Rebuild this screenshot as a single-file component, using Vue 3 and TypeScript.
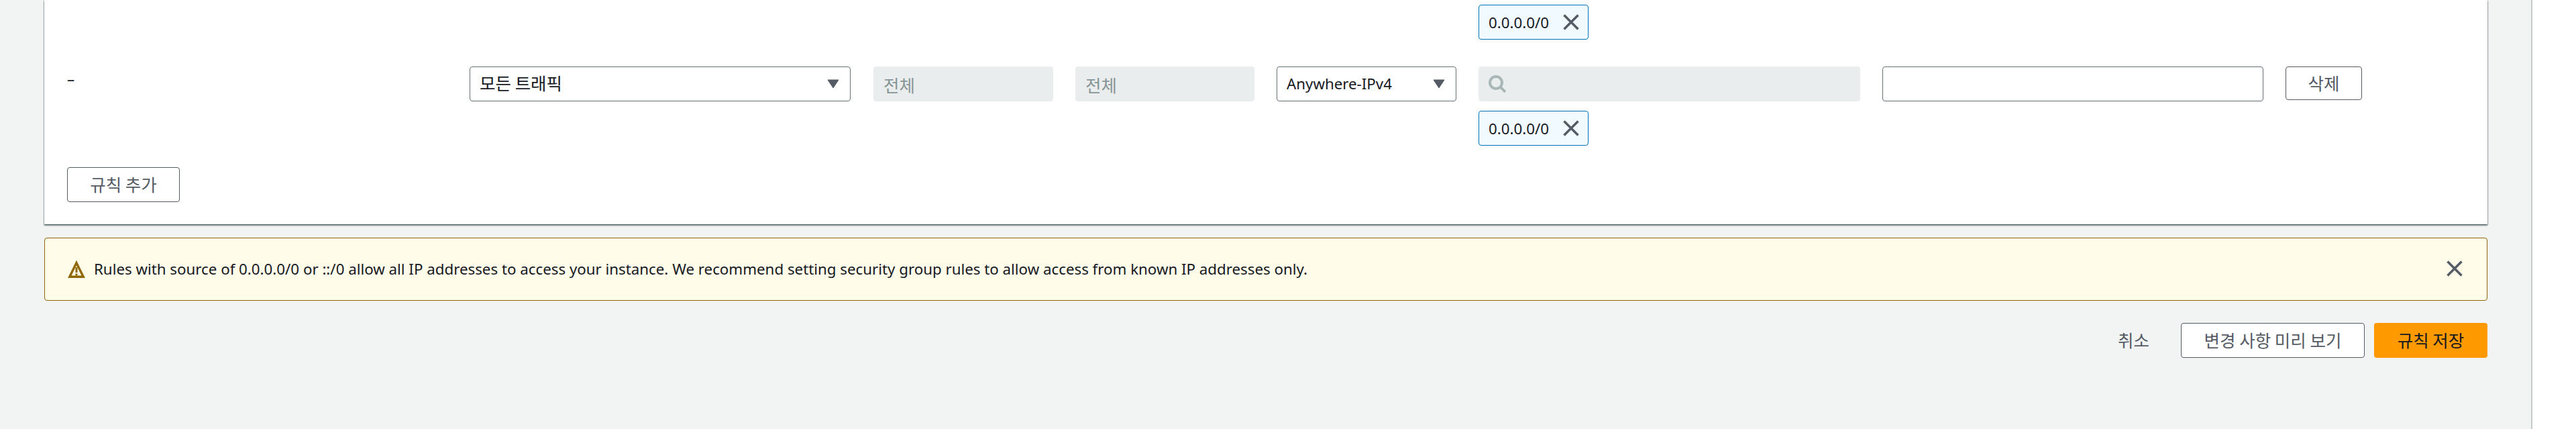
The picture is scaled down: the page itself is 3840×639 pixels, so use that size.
<template>
  <div class="page">
    <main class="content">
      <section class="card">
        <div class="rule-row">
          <div class="source-cell">
            <span class="tag">
              <span>0.0.0.0/0</span>
              <svg class="close" viewBox="0 0 16 16"><path d="M2 2l12 12M14 2L2 14" /></svg>
            </span>
          </div>
        </div>

        <div v-for="rule in rules" :key="rule.type" class="rule-row">
          <div class="rule-name">{{ rule.name }}</div>
          <div class="select wide">
            <span class="ko">{{ rule.type }}</span>
            <svg class="caret" viewBox="0 0 18 14"><path d="M1 1h16L9 13z" /></svg>
          </div>
          <div class="field disabled ko">{{ rule.protocol }}</div>
          <div class="field disabled ko">{{ rule.port }}</div>
          <div class="select">
            <span>{{ rule.sourceType }}</span>
            <svg class="caret" viewBox="0 0 18 14"><path d="M1 1h16L9 13z" /></svg>
          </div>
          <div class="source-cell">
            <div class="field disabled search">
              <svg class="search-icon" viewBox="0 0 26 26">
                <circle cx="11" cy="11" r="9" />
                <path d="M17 17l8 8" />
              </svg>
            </div>
            <span class="tag">
              <span>{{ rule.source }}</span>
              <svg class="close" viewBox="0 0 16 16"><path d="M2 2l12 12M14 2L2 14" /></svg>
            </span>
          </div>
          <div class="field desc"></div>
          <button class="btn delete ko" type="button">삭제</button>
        </div>

        <button class="btn add ko" type="button">규칙 추가</button>
      </section>

      <div class="alert">
        <svg class="warn" viewBox="0 0 26 26">
          <path class="warn-box" d="M13 3.5L2.8 24.2h20.4z" />
          <path class="warn-mark" d="M13 10v8M13 19.5v3" />
        </svg>
        <p class="alert-text">{{ warning }}</p>
        <svg class="close alert-close" viewBox="0 0 16 16"><path d="M2 2l12 12M14 2L2 14" /></svg>
      </div>

      <div class="actions">
        <button class="btn link ko" type="button">취소</button>
        <button class="btn preview ko" type="button">변경 사항 미리 보기</button>
        <button class="btn primary ko" type="button">규칙 저장</button>
      </div>
    </main>
  </div>
</template>

<script setup lang="ts">
interface Rule {
  name: string;
  type: string;
  protocol: string;
  port: string;
  sourceType: string;
  source: string;
}

const rules: Rule[] = [
  {
    name: '–',
    type: '모든 트래픽',
    protocol: '전체',
    port: '전체',
    sourceType: 'Anywhere-IPv4',
    source: '0.0.0.0/0'
  }
];

const warning =
  'Rules with source of 0.0.0.0/0 or ::/0 allow all IP addresses to access your instance. We recommend setting security group rules to allow access from known IP addresses only.';
</script>

<style>
body {
  background: #fff;
}
</style>

<style scoped>
.page {
  height: 639px;
  overflow: hidden;
  font-family: "Noto Sans", "Noto Sans CJK KR", sans-serif;
  font-size: 22.3px;
  color: #16191f;
}

.content {
  box-sizing: border-box;
  width: 3775px;
  height: 639px;
  padding: 0 65px 0 66px;
  background: #f2f3f3;
  border-right: 2px solid #c6cbcb;
}

.ko {
  font-family: "Noto Sans CJK KR", sans-serif;
  font-size: 25.5px;
}

.card {
  height: 334px;
  box-sizing: border-box;
  padding: 7px 34px 0;
  background: #fff;
  box-shadow: 0 2px 2px rgba(0, 28, 36, 0.5), 1px 1px 1px rgba(0, 28, 36, 0.2), -1px 1px 1px rgba(0, 28, 36, 0.2);
}

.rule-row {
  display: grid;
  grid-template-columns: 567px 569px 268px 267px 268px 569px 568px 114px;
  column-gap: 33px;
  align-items: start;
  margin-bottom: 40px;
}

.rule-row + .rule-row {
  margin-bottom: 32px;
}

.rule-row:first-child .source-cell {
  grid-column: 6;
}

.rule-name {
  line-height: 30px;
  padding-top: 4px;
}

.select,
.field {
  box-sizing: border-box;
  height: 52px;
  border-radius: 4px;
}

.select {
  display: flex;
  align-items: center;
  justify-content: space-between;
  padding: 0 16px 2px 14px;
  border: 1px solid #687078;
  background: #fff;
}

.wide {
  width: 568px;
}

.wide .ko {
  margin-bottom: 4px;
}

.caret {
  width: 18px;
  height: 14px;
  margin-top: 2px;
}

.caret path {
  fill: #545b64;
  stroke: #545b64;
  stroke-linejoin: round;
}

.field {
  display: flex;
  align-items: center;
  padding: 0 15px;
}

.disabled {
  background: #eaeded;
  color: #879596;
}

.desc {
  border: 1px solid #687078;
}

.search {
  align-self: stretch;
}

.search-icon {
  width: 26px;
  height: 26px;
  fill: none;
  stroke: #aab7b8;
  stroke-width: 4;
}

.source-cell {
  display: flex;
  flex-direction: column;
  align-items: flex-start;
  gap: 14px;
}

.tag {
  box-sizing: border-box;
  display: flex;
  align-items: center;
  justify-content: space-between;
  width: 164px;
  height: 52px;
  padding: 0 11px 0 14px;
  border: 1px solid #0073bb;
  border-radius: 4px;
  background: #f1faff;
}

.close {
  width: 28px;
  height: 28px;
  flex: none;
  fill: none;
  stroke: #545b64;
  stroke-width: 2;
}

.btn {
  box-sizing: border-box;
  height: 52px;
  padding: 0 0 4px;
  border: 1px solid #545b64;
  border-radius: 4px;
  background: #fff;
  color: #545b64;
  white-space: nowrap;
}

.delete {
  height: 50px;
}

.add {
  display: block;
  width: 168px;
}

.alert {
  box-sizing: border-box;
  display: flex;
  align-items: center;
  gap: 13px;
  height: 94px;
  margin-top: 20px;
  padding: 0 34px;
  border: 1px solid #906806;
  border-radius: 4px;
  background: #fffce9;
}

.warn {
  width: 26px;
  height: 26px;
  flex: none;
}

.warn-box {
  fill: none;
  stroke: #906806;
  stroke-width: 3.4;
}

.warn-mark {
  fill: none;
  stroke: #906806;
  stroke-width: 3;
}

.alert-text {
  flex: 1;
  margin: 0;
  line-height: 30px;
}

.alert-close {
  margin-top: -2px;
}

.actions {
  display: flex;
  justify-content: flex-end;
  gap: 14px;
  margin-top: 33px;
}

.link {
  width: 113px;
  border: none;
  background: none;
}

.preview {
  width: 274px;
}

.primary {
  width: 169px;
  border: none;
  background: #ff9900;
  color: #16191f;
}
</style>
